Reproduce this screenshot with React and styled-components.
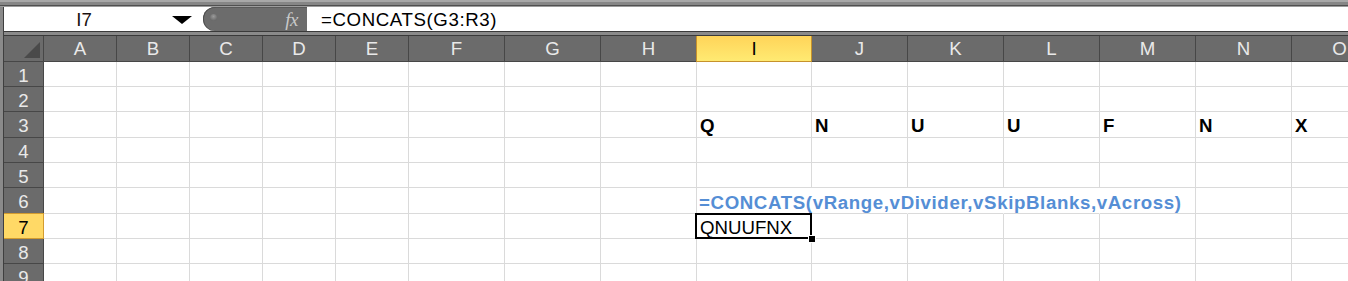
import React from 'react';
import styled, { createGlobalStyle, css } from 'styled-components';

const COLUMNS = [
  { name: 'A', width: 73 },
  { name: 'B', width: 73 },
  { name: 'C', width: 73 },
  { name: 'D', width: 73 },
  { name: 'E', width: 73 },
  { name: 'F', width: 96 },
  { name: 'G', width: 96 },
  { name: 'H', width: 96 },
  { name: 'I', width: 115 },
  { name: 'J', width: 96 },
  { name: 'K', width: 96 },
  { name: 'L', width: 96 },
  { name: 'M', width: 96 },
  { name: 'N', width: 96 },
  { name: 'O', width: 96 },
];

const ROW_HEIGHTS = [25, 25, 26, 25, 25, 26, 25, 25, 25];

const ACTIVE_COL = 'I';
const ACTIVE_ROW = 7;

// cell contents, keyed by address
const CELLS = {
  I3: { text: 'Q', kind: 'bold' },
  J3: { text: 'N', kind: 'bold' },
  K3: { text: 'U', kind: 'bold' },
  L3: { text: 'U', kind: 'bold' },
  M3: { text: 'F', kind: 'bold' },
  N3: { text: 'N', kind: 'bold' },
  O3: { text: 'X', kind: 'bold' },
  I6: { text: '=CONCATS(vRange,vDivider,vSkipBlanks,vAcross)', kind: 'note' },
  I7: { text: 'QNUUFNX', kind: 'plain' },
};

// cells whose right gridline is hidden under overflowing text
const COVERED = ['I6', 'J6', 'K6', 'L6'];

const GlobalStyle = createGlobalStyle`
  html, body {
    margin: 0;
    padding: 0;
    background: #8a8a8a;
  }
  body {
    font-family: "Liberation Sans", Arial, sans-serif;
  }
`;

const Window = styled.div`
  width: 1348px;
  height: 281px;
  overflow: hidden;
  background: #8a8a8a;
  display: flex;
  flex-direction: column;
`;

const TopEdge = styled.div`
  flex: none;
  height: 7px;
  box-sizing: border-box;
  background: linear-gradient(#a8a8a8 0, #a8a8a8 2px, #868686 2px, #868686 5px, #505050 5px);
  border-bottom: 1px solid #9c9c9c;
`;

const Body = styled.div`
  flex: 1;
  min-height: 0;
  margin-left: 3px;
  border-left: 1px solid #3f3f3f;
  display: flex;
  flex-direction: column;
`;

const FormulaBar = styled.div`
  display: flex;
  height: 24px;
  flex: none;
  background: #fff;
`;

const NameBox = styled.div`
  width: 199px;
  display: flex;
  align-items: center;
  background: #fff;
`;

const NameText = styled.span`
  flex: 1;
  text-align: center;
  font-size: 18.67px;
  color: #1a1010;
  padding: 2px 8px 0 0;
`;

const DropArrow = styled.span`
  width: 0;
  height: 0;
  border-left: 10px solid transparent;
  border-right: 10px solid transparent;
  border-top: 8px solid #000;
  margin: 2px 11px 0 0;
`;

const FxPill = styled.div`
  width: 104px;
  display: flex;
  align-items: center;
  justify-content: space-between;
  padding: 0 9px 0 7px;
  box-sizing: border-box;
  background: #6c6c6c;
  border-radius: 12px 0 0 12px;
  box-shadow: inset 1px 0 0 #4e4e4e, inset 0 1px 0 #5a5a5a;
`;

const Dot = styled.span`
  width: 7px;
  height: 7px;
  border-radius: 50%;
  background: radial-gradient(circle at 50% 35%, #9a9a9a, #5a5a5a);
  margin-top: -3px;
`;

const FxLabel = styled.span`
  font-family: "Liberation Serif", "Times New Roman", serif;
  font-style: italic;
  font-size: 19px;
  color: #c9c9c9;
  letter-spacing: -0.5px;
  padding-top: 1px;
`;

const FormulaInput = styled.div`
  flex: 1;
  display: flex;
  align-items: center;
  padding: 2px 0 0 14px;
  font-size: 18.67px;
  letter-spacing: 0.6px;
  color: #000;
  background: #fff;
`;

const Separator = styled.div`
  height: 5px;
  flex: none;
  box-sizing: border-box;
  background: #8a8a8a;
  border-top: 1px solid #3a3a3a;
  border-bottom: 1px solid #3a3a3a;
`;

const Sheet = styled.div`
  display: grid;
  grid-template-columns: 40px ${COLUMNS.map((c) => `${c.width}px`).join(' ')};
  grid-template-rows: 26px ${ROW_HEIGHTS.map((h) => `${h}px`).join(' ')};
  background: #fff;
`;

const headerBase = css`
  font-size: 18.67px;
  color: #e9e9e9;
  background: #6b6b6b;
  display: flex;
  align-items: center;
  justify-content: center;
  box-sizing: border-box;
  border-right: 1px solid #474747;
  border-bottom: 1px solid #474747;
`;

const Corner = styled.div`
  ${headerBase};
  position: relative;
  overflow: hidden;
`;

const CornerTriangle = styled.span`
  position: absolute;
  right: 3px;
  bottom: 3px;
  width: 0;
  height: 0;
  border-left: 16px solid transparent;
  border-bottom: 16px solid #4a4a4a;
`;

const ColHeader = styled.div`
  ${headerBase};
  padding-top: 1px;
  ${({ $active }) => $active && css`
    background: linear-gradient(#ffd459, #ffea72);
    color: #000;
    border-right-color: #c6922c;
    border-bottom-color: #c6922c;
    box-shadow: -1px 0 0 #c6922c;
  `}
`;

const RowHeader = styled.div`
  ${headerBase};
  padding-top: 3px;
  ${({ $active }) => $active && css`
    background: #ffd966;
    color: #000;
    border-right-color: #d39c2f;
    border-bottom-color: #d39c2f;
    box-shadow: 0 -1px 0 #d39c2f;
  `}
`;

const Cell = styled.div`
  box-sizing: border-box;
  border-right: 1px solid ${({ $covered }) => ($covered ? '#fff' : '#dadada')};
  border-bottom: 1px solid #dadada;
  display: flex;
  align-items: flex-end;
  padding: 0 0 0 3px;
  white-space: nowrap;
  overflow: visible;
  font-size: 18.67px;
  line-height: 20px;
  color: #000;
  ${({ $filled }) => $filled && css`
    position: relative;
    z-index: 1;
  `}
  ${({ $kind }) => $kind === 'bold' && css`
    font-weight: bold;
    letter-spacing: 0.4px;
    padding-bottom: 1px;
  `}
  ${({ $kind }) => $kind === 'note' && css`
    font-weight: bold;
    letter-spacing: 0.63px;
    color: #558ed5;
    padding-left: 2px;
    padding-bottom: 1px;
    line-height: 19px;
  `}
`;

const Selection = styled.span`
  position: absolute;
  top: -1px;
  left: -2px;
  right: -1px;
  bottom: -1px;
  border: 2px solid #000;
  pointer-events: none;
`;

const FillHandle = styled.span`
  position: absolute;
  right: -5px;
  bottom: -5px;
  width: 6px;
  height: 6px;
  background: #000;
  outline: 1px solid #fff;
`;

export default function App() {
  return (
    <Window>
      <GlobalStyle />
      <TopEdge />
      <Body>
        <FormulaBar>
          <NameBox>
            <NameText>{`${ACTIVE_COL}${ACTIVE_ROW}`}</NameText>
            <DropArrow />
          </NameBox>
          <FxPill>
            <Dot />
            <FxLabel>fx</FxLabel>
          </FxPill>
          <FormulaInput>=CONCATS(G3:R3)</FormulaInput>
        </FormulaBar>
        <Separator />
        <Sheet>
          <Corner>
            <CornerTriangle />
          </Corner>
          {COLUMNS.map((c) => (
            <ColHeader key={c.name} $active={c.name === ACTIVE_COL}>
              {c.name}
            </ColHeader>
          ))}
          {ROW_HEIGHTS.map((_, i) => {
            const row = i + 1;
            return (
              <React.Fragment key={row}>
                <RowHeader $active={row === ACTIVE_ROW}>{row}</RowHeader>
                {COLUMNS.map((c) => {
                  const addr = `${c.name}${row}`;
                  const cell = CELLS[addr];
                  const isActive = c.name === ACTIVE_COL && row === ACTIVE_ROW;
                  return (
                    <Cell
                      key={addr}
                      $filled={!!cell || isActive}
                      $kind={cell ? cell.kind : undefined}
                      $covered={COVERED.includes(addr)}
                    >
                      {cell ? cell.text : null}
                      {isActive && (
                        <Selection>
                          <FillHandle />
                        </Selection>
                      )}
                    </Cell>
                  );
                })}
              </React.Fragment>
            );
          })}
        </Sheet>
      </Body>
    </Window>
  );
}
